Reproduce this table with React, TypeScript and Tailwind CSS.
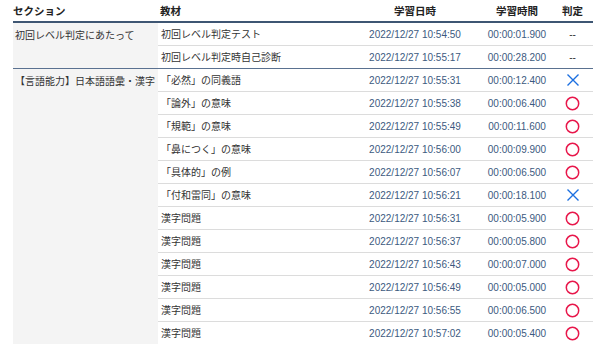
import React from "react";

type Mark = "none" | "ok" | "ng";
type Row = { title: string; date: string; time: string; mark: Mark };
type Group = { section: string; rows: Row[] };

const groups: Group[] = [
  {
    section: "初回レベル判定にあたって",
    rows: [
      { title: "初回レベル判定テスト", date: "2022/12/27 10:54:50", time: "00:00:01.900", mark: "none" },
      { title: "初回レベル判定時自己診断", date: "2022/12/27 10:55:17", time: "00:00:28.200", mark: "none" },
    ],
  },
  {
    section: "【言語能力】日本語語彙・漢字",
    rows: [
      { title: "「必然」の同義語", date: "2022/12/27 10:55:31", time: "00:00:12.400", mark: "ng" },
      { title: "「論外」の意味", date: "2022/12/27 10:55:38", time: "00:00:06.400", mark: "ok" },
      { title: "「規範」の意味", date: "2022/12/27 10:55:49", time: "00:00:11.600", mark: "ok" },
      { title: "「鼻につく」の意味", date: "2022/12/27 10:56:00", time: "00:00:09.900", mark: "ok" },
      { title: "「具体的」の例", date: "2022/12/27 10:56:07", time: "00:00:06.500", mark: "ok" },
      { title: "「付和雷同」の意味", date: "2022/12/27 10:56:21", time: "00:00:18.100", mark: "ng" },
      { title: "漢字問題", date: "2022/12/27 10:56:31", time: "00:00:05.900", mark: "ok" },
      { title: "漢字問題", date: "2022/12/27 10:56:37", time: "00:00:05.800", mark: "ok" },
      { title: "漢字問題", date: "2022/12/27 10:56:43", time: "00:00:07.000", mark: "ok" },
      { title: "漢字問題", date: "2022/12/27 10:56:49", time: "00:00:05.000", mark: "ok" },
      { title: "漢字問題", date: "2022/12/27 10:56:55", time: "00:00:06.500", mark: "ok" },
      { title: "漢字問題", date: "2022/12/27 10:57:02", time: "00:00:05.400", mark: "ok" },
    ],
  },
];

function Judge({ mark }: { mark: Mark }) {
  if (mark === "none") return <span className="text-[10px] text-[#333]">--</span>;
  if (mark === "ok")
    return (
      <svg width="15" height="15" viewBox="0 0 15 15">
        <circle cx="7.5" cy="7.5" r="6.2" fill="none" stroke="#e8174b" strokeWidth="1.5" />
      </svg>
    );
  return (
    <svg width="14" height="14" viewBox="0 0 14 14">
      <path d="M1.5 1.5 L12.5 12.5 M12.5 1.5 L1.5 12.5" stroke="#1b6fe0" strokeWidth="1.4" />
    </svg>
  );
}

export default function App() {
  return (
    <div className="h-[344px] w-[600px] overflow-hidden bg-white pl-[13px] pr-[7px] font-['Liberation_Sans','Noto_Sans_CJK_JP',sans-serif] text-[10px] text-[#333]">
      <div className="flex h-[23px] items-center border-b-2 border-[#3e5673] pt-[2px] text-[10.5px] font-bold text-[#222]">
        <div className="w-[145px]">セクション</div>
        <div className="w-[190px] pl-[2px]">教材</div>
        <div className="w-[134px] text-center">学習日時</div>
        <div className="w-[70px] text-center">学習時間</div>
        <div className="flex-1 text-center">判定</div>
      </div>
      {groups.map((g) => (
        <div key={g.section} className="flex border-b border-[#5a7190]">
          <div className="w-[145px] shrink-0 whitespace-nowrap bg-[#f4f4f4] pl-[2px] pt-[5px] text-[#333]">
            {g.section}
          </div>
          <div className="flex-1">
            {g.rows.map((r, i) => (
              <div
                key={r.date}
                className={`flex items-center ${i < g.rows.length - 1 ? "h-[23px] border-b border-[#dcdcdc]" : "h-[22px]"}`}
              >
                <div className="w-[190px] pl-[3px]">{r.title}</div>
                <div className="w-[134px] text-center text-[#3c5a80]">{r.date}</div>
                <div className="w-[70px] text-center text-[#3c5a80]">{r.time}</div>
                <div className="flex flex-1 justify-center">
                  <Judge mark={r.mark} />
                </div>
              </div>
            ))}
          </div>
        </div>
      ))}
    </div>
  );
}
